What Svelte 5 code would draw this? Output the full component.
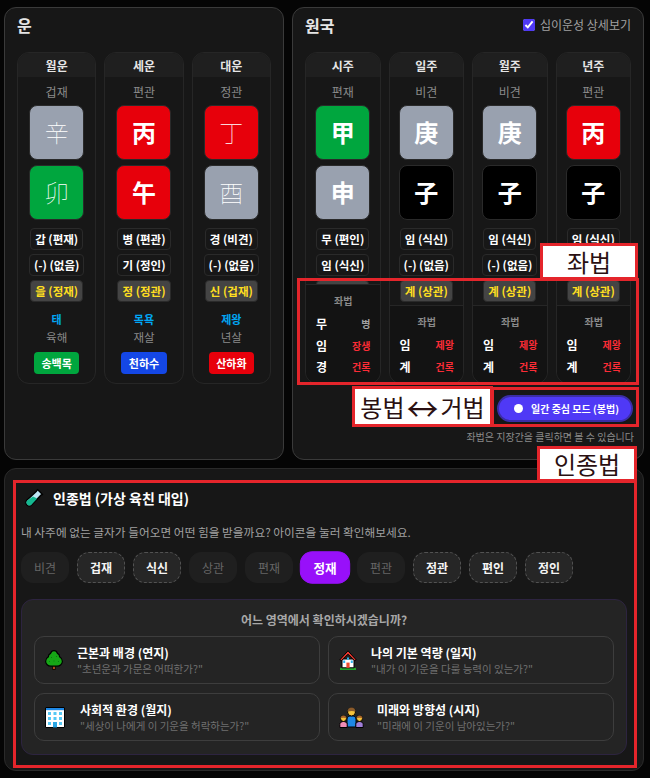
<script lang="ts">
  type Pillar = {
    title: string;
    god: string;
    stem: [string, string, boolean];
    branch: [string, string, boolean];
    hidden: string[];
    star?: string;
    sal?: string;
    badge?: [string, string];
    detail?: string[][];
    open?: boolean;
  };

  const GREEN = '#00a63e';
  const RED = '#e7000b';
  const GREY = '#99a1af';
  const BLACK = '#000';

  const luck: Pillar[] = [
    { title: '월운', god: '겁재', stem: ['辛', GREY, false], branch: ['卯', GREEN, false], hidden: ['갑 (편재)', '(-) (없음)', '을 (정재)'], star: '태', sal: '육해', badge: ['송백목', GREEN] },
    { title: '세운', god: '편관', stem: ['丙', RED, true], branch: ['午', RED, true], hidden: ['병 (편관)', '기 (정인)', '정 (정관)'], star: '목욕', sal: '재살', badge: ['천하수', '#1447e6'] },
    { title: '대운', god: '정관', stem: ['丁', RED, false], branch: ['酉', GREY, false], hidden: ['경 (비견)', '(-) (없음)', '신 (겁재)'], star: '제왕', sal: '년살', badge: ['산하화', RED] }
  ];

  const seatRows = [['임', '제왕'], ['계', '건록']];

  const natal: Pillar[] = [
    { title: '시주', god: '편재', stem: ['甲', GREEN, true], branch: ['申', GREY, true], hidden: ['무 (편인)', '임 (식신)', '경 (비견)'], open: true, detail: [['무', '병'], ['임', '장생'], ['경', '건록']] },
    { title: '일주', god: '비견', stem: ['庚', GREY, true], branch: ['子', BLACK, true], hidden: ['임 (식신)', '(-) (없음)', '계 (상관)'], detail: seatRows },
    { title: '월주', god: '비견', stem: ['庚', GREY, true], branch: ['子', BLACK, true], hidden: ['임 (식신)', '(-) (없음)', '계 (상관)'], detail: seatRows },
    { title: '년주', god: '편관', stem: ['丙', RED, true], branch: ['子', BLACK, true], hidden: ['임 (식신)', '(-) (없음)', '계 (상관)'], detail: seatRows }
  ];

  const gods = [
    { label: '비견' }, { label: '겁재', lack: true }, { label: '식신', lack: true }, { label: '상관' }, { label: '편재' },
    { label: '정재', active: true }, { label: '편관' }, { label: '정관', lack: true }, { label: '편인', lack: true }, { label: '정인', lack: true }
  ];

  const areas = [
    { icon: 'tree', iconWidth: 22, title: '근본과 배경 (연지)', sub: '"초년운과 가문은 어떠한가?"' },
    { icon: 'house', iconWidth: 22, title: '나의 기본 역량 (일지)', sub: '"내가 이 기운을 다룰 능력이 있는가?"' },
    { icon: 'office', iconWidth: 25, title: '사회적 환경 (월지)', sub: '"세상이 나에게 이 기운을 허락하는가?"' },
    { icon: 'family', iconWidth: 28, title: '미래와 방향성 (시지)', sub: '"미래에 이 기운이 남아있는가?"' }
  ];
</script>

{#snippet pillar(p: Pillar)}
  <div class="pillar">
    <div class="pillar-head">{p.title}</div>
    <div class="pillar-body">
      <div class="god">{p.god}</div>
      <div class="block" class:strong={p.stem[2]} style="background:{p.stem[1]}">{p.stem[0]}</div>
      <div class="block" class:strong={p.branch[2]} style="background:{p.branch[1]}">{p.branch[0]}</div>
      <div class="chips">
        {#each p.hidden as h, i}
          <div class="chip" class:main={i === 2}>{h}</div>
        {/each}
      </div>
      {#if p.star}
        <div class="star">{p.star}</div>
        <div class="sal">{p.sal}</div>
        <div class="badge" style="background:{p.badge?.[1]}">{p.badge?.[0]}</div>
      {/if}
    </div>
    {#if p.detail}
      <div class="seat" class:open={p.open}>
        <div class="seat-title">좌법</div>
        {#each p.detail as row}
          <div class="seat-row">
            <span class="seat-stem">{row[0]}</span>
            <span class="seat-val" class:dim={row[1] === '병'}>{row[1]}</span>
          </div>
        {/each}
      </div>
    {/if}
  </div>
{/snippet}

<div class="page">
  <div class="top">
    <section class="panel">
      <div class="panel-head"><h2>운</h2></div>
      <div class="pillars">
        {#each luck as p}
          {@render pillar(p)}
        {/each}
      </div>
    </section>

    <section class="panel">
      <div class="panel-head">
        <h2>원국</h2>
        <label class="check"><input type="checkbox" checked />십이운성 상세보기</label>
      </div>
      <div class="pillars">
        {#each natal as p}
          {@render pillar(p)}
        {/each}
      </div>
      <div class="mode-row">
        <button class="mode"><span class="dot"></span>일간 중심 모드 (봉법)</button>
      </div>
      <p class="hint">좌법은 지장간을 클릭하면 볼 수 있습니다</p>
    </section>
  </div>

  <section class="graft">
    <div class="graft-title">
      <svg viewBox="0 0 20 20" width="20" height="20">
        <path d="M13.500 1.500 18.500 6.500 16.800 7.200 7.800 16.800a3.400 3.400 0 0 1-5-4.600L12.500 3.200Z" fill="#bfe6f5" stroke="#000" stroke-width="1.400" stroke-linejoin="round" />
        <path d="M9 8.500 13.200 10.500 7.600 16.400a2.900 2.900 0 0 1-4.400-3.800Z" fill="#14b890" />
      </svg>
      <h3>인종법 (가상 육친 대입)</h3>
    </div>
    <p class="graft-desc">내 사주에 없는 글자가 들어오면 어떤 힘을 받을까요? 아이콘을 눌러 확인해보세요.</p>
    <div class="gods">
      {#each gods as g}
        <button class="god-btn" class:lack={g.lack} class:active={g.active}>{g.label}</button>
      {/each}
    </div>
    <div class="area-box">
      <h4>어느 영역에서 확인하시겠습니까?</h4>
      <div class="areas">
        {#each areas as a}
          <button class="area">
            <span class="area-icon" style="width:{a.iconWidth}px">
              {#if a.icon === 'tree'}
                <svg viewBox="0 0 18 20" width="18" height="20">
                  <path d="M7.600 15.500h2.800V19.500H7.600z" fill="#b5531c" stroke="#000" stroke-width=".8" />
                  <path d="M9 .600C11 .600 12 2 12.400 3.400 13.800 4 14.600 5.400 14.600 6.800 16.200 7.800 17.400 9.400 17.400 11.200 17.400 14 15 16.200 12 16.200H6C3 16.200 .600 14 .600 11.200.600 9.400 1.800 7.800 3.400 6.800 3.400 5.400 4.200 4 5.600 3.400 6 2 7 .600 9 .600Z" fill="#16a716" stroke="#000" stroke-width="1.200" />
                  <path d="M6 7.500h1M11 6.500h1M8.500 11h1M4 11.500h1M13 11.500h1" stroke="#0b7d10" stroke-width="1" />
                </svg>
              {:else if a.icon === 'house'}
                <svg viewBox="0 0 18 20" width="18" height="20">
                  <path d="M1 18.900h16" stroke="#22a32c" stroke-width="2.200" />
                  <path d="M3 9h12v8.800H3z" fill="#fff" stroke="#000" stroke-width="1" />
                  <path d="M9 .800 .800 9.800 2.600 10.600 9 4.200 15.400 10.600 17.200 9.800Z" fill="#e8382f" stroke="#000" stroke-width="1" stroke-linejoin="round" />
                  <path d="M7.400 12.600h3.200v5.200H7.400z" fill="#ee4b2f" />
                  <path d="M11.800 10.500h2v2.400h-2zM4.200 10.500h2v2.400h-2zM8 7.600h2v2.200H8z" fill="#2cb5ef" />
                </svg>
              {:else if a.icon === 'office'}
                <svg viewBox="0 0 20 21" width="20" height="21">
                  <path d="M.500 .500h19v20h-19z" fill="#fff" stroke="#000" />
                  <path d="M1 1h18v2.200H1z" fill="#1e88e5" />
                  <path d="M3 5h3v3H3zM8.500 5h3v3h-3zM14 5h3v3h-3zM3 10h3v3H3zM8.500 10h3v3h-3zM14 10h3v3h-3zM3 15h3v3H3zM14 15h3v3h-3z" fill="#55c8f5" />
                  <path d="M8 15h4v5.500H8z" fill="#2aa5e2" />
                </svg>
              {:else}
                <svg viewBox="0 0 25 21" width="25" height="21">
                  <path d="M8 20v-8c0-2 2-3.200 4.500-3.200S17 10 17 12v8Z" fill="#1e88e5" stroke="#000" stroke-width="1" />
                  <circle cx="12.500" cy="5" r="4" fill="#f5c33b" stroke="#000" stroke-width="1" />
                  <path d="M8.600 4.800C8.600 1.800 10.600.600 12.500.600S16.400 1.800 16.400 4.800C14.500 3.800 11 3.800 8.600 4.800Z" fill="#8a5a2b" />
                  <path d="M.800 20.500v-3.200C.800 15.600 2.400 14.500 4.500 14.500S8.200 15.600 8.200 17.300v3.200Z" fill="#f28cb5" stroke="#000" stroke-width="1" />
                  <circle cx="4.500" cy="11.500" r="3" fill="#f5c33b" stroke="#000" stroke-width="1" />
                  <path d="M1.500 11.500C1.500 9.500 3 8.400 4.500 8.400S7.500 9.500 7.500 11.500C6 10.500 3 10.500 1.500 11.500Z" fill="#a8642a" />
                  <path d="M16.800 20.500v-3.200c0-1.700 1.600-2.800 3.700-2.800s3.700 1.100 3.700 2.800v3.200Z" fill="#a07fd8" stroke="#000" stroke-width="1" />
                  <circle cx="20.500" cy="11.500" r="3" fill="#f5c33b" stroke="#000" stroke-width="1" />
                  <path d="M17.500 11.500C17.500 9.500 19 8.400 20.500 8.400S23.500 9.500 23.500 11.500C22 10.500 19 10.500 17.500 11.500Z" fill="#a8642a" />
                </svg>
              {/if}
            </span>
            <span class="area-text">
              <span class="area-title">{a.title}</span>
              <span class="area-sub">{a.sub}</span>
            </span>
          </button>
        {/each}
      </div>
    </div>
  </section>

  <!-- review marks drawn over the capture -->
  <div class="mark box-seat"></div>
  <div class="mark tag tag-seat">좌법</div>
  <div class="mark box-mode"></div>
  <div class="mark tag tag-mode">봉법<span class="arrow">↔</span>거법</div>
  <div class="mark box-graft"></div>
  <div class="mark tag tag-graft">인종법</div>
</div>

<style>
  :global(body) {
    background: #050505;
    font-family: "Noto Sans CJK KR", "Noto Sans", sans-serif;
  }

  .page {
    position: relative;
    width: 650px;
    height: 778px;
    box-sizing: border-box;
    padding: 7px 6px 0 4px;
    overflow: hidden;
  }

  .top {
    display: grid;
    grid-template-columns: 280px 352px;
    gap: 8px;
  }

  .panel {
    height: 453px;
    box-sizing: border-box;
    padding: 0 12px;
    background: #171717;
    border: 1px solid #3a3a3a;
    border-radius: 12px;
  }

  .panel-head {
    height: 44px;
    display: flex;
    justify-content: space-between;
    align-items: center;
    padding-bottom: 11px;
    box-sizing: border-box;
  }

  h2 {
    margin: 0;
    font-size: 16px;
    font-weight: 700;
    color: #e5e5e5;
  }

  .check {
    display: flex;
    align-items: center;
    gap: 5px;
    font-size: 12px;
    color: #a1a1a1;
  }

  .check input {
    width: 12px;
    height: 12px;
    margin: 0;
    accent-color: #4f39f6;
  }

  .pillars {
    display: grid;
    grid-auto-flow: column;
    grid-auto-columns: 1fr;
    gap: 8px;
  }

  .pillar {
    position: relative;
    height: 332px;
    box-sizing: border-box;
    display: flex;
    flex-direction: column;
    border: 1px solid #262626;
    border-radius: 12px;
    overflow: hidden;
  }

  .pillar-head {
    height: 24px;
    flex: none;
    display: flex;
    align-items: center;
    justify-content: center;
    background: #1f1f1f;
    font-size: 12px;
    font-weight: 700;
    color: #e5e5e5;
  }

  .pillar-body {
    display: flex;
    flex-direction: column;
    align-items: center;
  }

  .god {
    height: 28px;
    display: flex;
    align-items: center;
    font-size: 12px;
    color: #8a8a8a;
  }

  .block {
    width: 55px;
    height: 55px;
    box-sizing: border-box;
    margin-bottom: 5px;
    padding-bottom: 2px;
    display: flex;
    align-items: center;
    justify-content: center;
    border: 1px solid #2a2a2a;
    border-radius: 8px;
    font-size: 24px;
    font-weight: 100;
    color: #fff;
  }

  .block.strong {
    font-weight: 700;
  }

  .chips {
    margin-top: 3px;
    display: flex;
    flex-direction: column;
    align-items: center;
    gap: 4px;
  }

  .chip {
    height: 22px;
    box-sizing: border-box;
    padding: 0 4px;
    display: flex;
    align-items: center;
    border: 1px solid #2a2a2a;
    border-radius: 4px;
    font-size: 11.500px;
    font-weight: 700;
    white-space: nowrap;
    color: #fff;
  }

  .chip.main {
    background: #444;
    color: #ffdf20;
  }

  .star {
    margin-top: 8px;
    font-size: 11px;
    line-height: 18px;
    font-weight: 700;
    color: #00a6f4;
  }

  .sal {
    font-size: 11.500px;
    line-height: 18px;
    color: #8a8a8a;
  }

  .badge {
    margin-top: 6px;
    padding: 0 7.500px;
    height: 22px;
    display: flex;
    align-items: center;
    border-radius: 4px;
    font-size: 11px;
    font-weight: 700;
    color: #fff;
  }

  .seat {
    margin-top: 3px;
    flex: 1;
    display: flex;
    flex-direction: column;
    padding: 6px 9px 0 10px;
    border-top: 1px solid #262626;
    background: #131313;
  }

  /* first pillar: the panel is opened over the hidden stems */
  .seat.open {
    position: absolute;
    left: 0;
    right: 0;
    bottom: 0;
    height: 99px;
    box-sizing: border-box;
    margin: 0;
  }

  .seat-title {
    height: 22px;
    font-size: 10px;
    font-weight: 700;
    line-height: 20px;
    text-align: center;
    color: #8a8a8a;
  }

  .seat-row {
    height: 21.500px;
    display: flex;
    align-items: center;
    justify-content: space-between;
  }

  .seat-stem {
    font-size: 12px;
    font-weight: 700;
    color: #fff;
  }

  .seat-val {
    font-size: 10px;
    font-weight: 700;
    color: #fb2c36;
  }

  .seat-val.dim {
    color: #a1a1a1;
  }

  .mode-row {
    display: flex;
    justify-content: flex-end;
    margin: 11px -2px 0 0;
  }

  .mode {
    width: 136px;
    height: 27px;
    padding: 0 0 0 15px;
    display: flex;
    align-items: center;
    gap: 8px;
    box-sizing: border-box;
    background: #4f39f6;
    border: 2px solid #3b2da6;
    border-radius: 14px;
    font: inherit;
    font-size: 10px;
    font-weight: 700;
    color: #fff;
  }

  .dot {
    width: 9px;
    height: 9px;
    border-radius: 50%;
    background: #fff;
  }

  .hint {
    margin: 7px -3px 0 0;
    font-size: 10px;
    line-height: 15px;
    text-align: right;
    color: #8a8a8a;
  }

  .graft {
    margin-top: 8px;
    width: 640px;
    height: 303px;
    box-sizing: border-box;
    padding: 17px 16px 0;
    background: #171717;
    border: 1px solid #2a2a2a;
    border-radius: 12px;
  }

  .graft-title {
    display: flex;
    align-items: center;
    gap: 9px;
    margin-left: 3px;
    height: 24px;
  }

  h3 {
    margin: 0;
    font-size: 14px;
    font-weight: 700;
    color: #fff;
  }

  .graft-desc {
    margin: 13px 0 0;
    font-size: 11.700px;
    line-height: 18px;
    color: #a1a1a1;
  }

  .gods {
    margin-top: 11px;
    display: flex;
    gap: 8px;
  }

  .god-btn {
    width: 48px;
    height: 31px;
    box-sizing: border-box;
    padding: 0;
    background: #1f1f1f;
    border: 1px solid #1f1f1f;
    border-radius: 12px;
    font: inherit;
    font-size: 12px;
    color: #666;
  }

  .god-btn.lack {
    background: #262626;
    border: 1px dashed #525252;
    font-weight: 700;
    color: #f5f5f5;
  }

  .god-btn.active {
    background: #9810fa;
    border-color: #9810fa;
    font-weight: 700;
    color: #fff;
    transform: scale(1.05);
  }

  .area-box {
    margin-top: 16px;
    width: 606px;
    height: 156px;
    box-sizing: border-box;
    padding: 0 12px;
    background: #242424;
    border: 1px solid #2d2440;
    border-radius: 12px;
  }

  h4 {
    margin: 0;
    height: 36px;
    padding-top: 2px;
    box-sizing: border-box;
    display: flex;
    align-items: center;
    justify-content: center;
    font-size: 12px;
    font-weight: 700;
    color: #a8a8a8;
  }

  .areas {
    display: grid;
    grid-template-columns: 286px 286px;
    gap: 9px 8px;
  }

  .area {
    height: 48px;
    box-sizing: border-box;
    padding: 0 0 0 10px;
    display: flex;
    align-items: center;
    gap: 10px;
    background: #242424;
    border: 1px solid #3d3d3d;
    border-radius: 10px;
    font: inherit;
    text-align: left;
  }

  .area-icon {
    flex: none;
    display: flex;
    align-items: center;
    justify-content: flex-start;
  }

  .area-text {
    display: flex;
    flex-direction: column;
  }

  .area-title {
    font-size: 12px;
    line-height: 16px;
    font-weight: 700;
    color: #fff;
  }

  .area-sub {
    font-size: 10.500px;
    line-height: 15px;
    color: #707070;
  }

  .mark {
    position: absolute;
    box-sizing: border-box;
    border: 3px solid #e4252b;
  }

  .tag {
    display: flex;
    align-items: center;
    justify-content: center;
    background: #fff;
    font-size: 24px;
    line-height: 1;
    color: #2a1012;
  }

  .arrow {
    font-size: 32px;
    margin: 0 2px;
  }

  .box-seat { left: 297px; top: 278px; width: 342px; height: 107px; }
  .box-mode { left: 491px; top: 387px; width: 148px; height: 40px; }
  .box-graft { left: 13px; top: 480px; width: 624px; height: 288px; }
  .tag-seat { left: 540px; top: 243px; width: 98px; height: 37px; }
  .tag-mode { left: 352px; top: 386px; width: 141px; height: 41px; }
  .tag-graft { left: 537px; top: 446px; width: 100px; height: 36px; }
</style>
